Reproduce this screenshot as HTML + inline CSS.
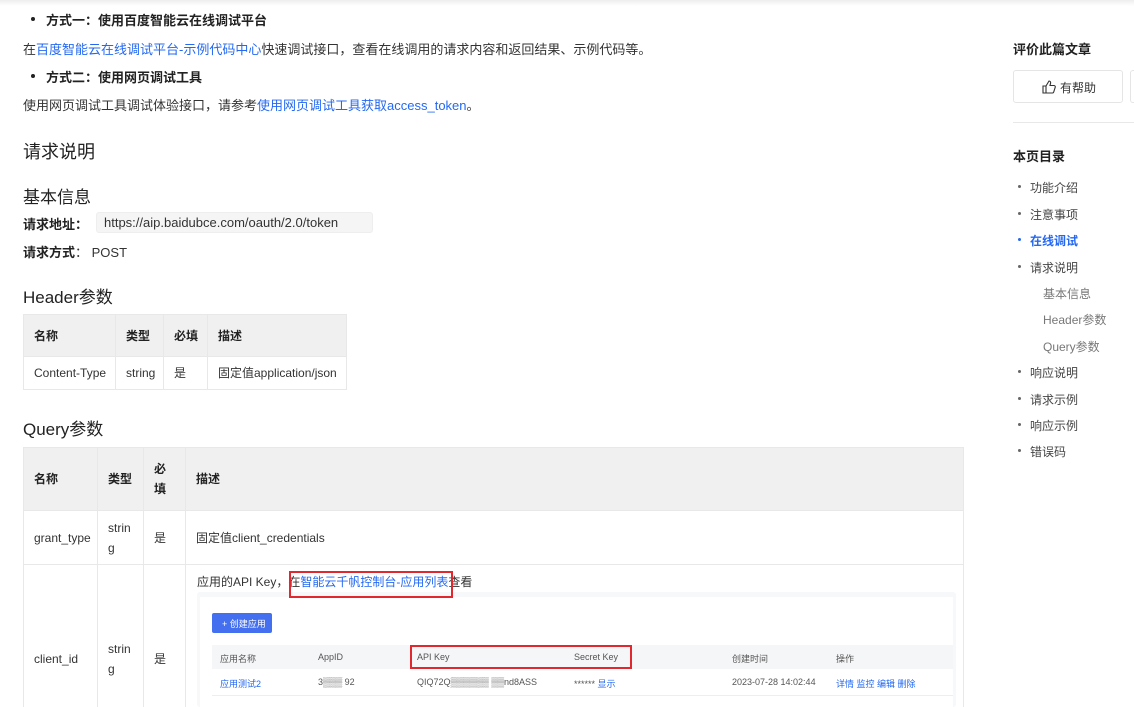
<!DOCTYPE html>
<html style="width:1134px;height:707px;overflow:hidden"><head><meta charset="utf-8"><style>
*{margin:0;padding:0;box-sizing:border-box}
body{width:1134px;height:707px;overflow:hidden;background:#fff;font-family:"Liberation Sans","Noto Sans CJK SC",sans-serif;color:#333;font-size:13px;position:relative}
.a{position:absolute;white-space:nowrap}
.b{font-weight:bold;color:#222}
.l{color:#2468f2}
table{position:absolute;border-collapse:collapse;font-size:12px;color:#333;table-layout:fixed}
td,th{border:1px solid #e8e8e8;padding:0 10px;text-align:left;vertical-align:middle;white-space:nowrap;line-height:20px}
th{background:#f0f0f0;font-weight:bold;color:#222}
.dot{position:absolute;width:4px;height:4px;border-radius:2px;background:#666}
.toc{position:absolute;left:1030px;font-size:12px;color:#444;white-space:nowrap}
.s{font-size:9px;color:#555;position:absolute;white-space:nowrap}
</style></head><body>
<div class="a" style="left:0;top:0;width:1134px;height:6px;background:linear-gradient(#eee,#fff)"></div>
<div class="dot" style="left:31px;top:17px;background:#222"></div>
<div class="a b" style="left:46px;top:10px">方式一：使用百度智能云在线调试平台</div>
<div class="a" style="left:23px;top:39px">在<span class="l">百度智能云在线调试平台-示例代码中心</span>快速调试接口，查看在线调用的请求内容和返回结果、示例代码等。</div>
<div class="dot" style="left:31px;top:74px;background:#222"></div>
<div class="a b" style="left:46px;top:67px">方式二：使用网页调试工具</div>
<div class="a" style="left:23px;top:95px">使用网页调试工具调试体验接口，请参考<span class="l">使用网页调试工具获取access_token</span>。</div>
<div class="a" style="left:23px;top:138px;font-size:18px;color:#222">请求说明</div>
<div class="a" style="left:23px;top:183px;font-size:17px;color:#222">基本信息</div>
<div class="a b" style="left:23px;top:214px">请求地址：</div>
<div class="a" style="left:96px;top:212px;width:277px;height:21px;background:#f5f5f5;border:1px solid #eee;border-radius:3px;padding:2px 7px;color:#333">https://aip.baidubce.com/oauth/2.0/token</div>
<div class="a" style="left:23px;top:242px"><b style="color:#222">请求方式</b>： POST</div>
<div class="a" style="left:23px;top:283px;font-size:17px;color:#222">Header参数</div>
<table style="left:23px;top:314px;width:323px">
<colgroup><col style="width:92px"><col style="width:48px"><col style="width:44px"><col style="width:139px"></colgroup>
<tr style="height:42px"><th>名称</th><th>类型</th><th>必填</th><th>描述</th></tr>
<tr style="height:33px"><td>Content-Type</td><td>string</td><td>是</td><td>固定值application/json</td></tr></table>
<div class="a" style="left:23px;top:415px;font-size:17px;color:#222">Query参数</div>
<table style="left:23px;top:447px;width:941px">
<colgroup><col style="width:74px"><col style="width:46px"><col style="width:42px"><col></colgroup>
<tr style="height:63px"><th>名称</th><th>类型</th><th>必<br>填</th><th>描述</th></tr>
<tr style="height:54px"><td>grant_type</td><td>strin<br>g</td><td>是</td><td>固定值client_credentials</td></tr>
<tr style="height:143px"><td style="padding-top:46px">client_id</td><td style="padding-top:46px">strin<br>g</td><td style="padding-top:46px">是</td><td></td></tr></table>
<div class="a" style="left:197px;top:573px;font-size:12px">应用的API Key，在<span class="l">智能云千帆控制台-应用列表</span>查看</div>
<div class="a" style="left:197px;top:592px;width:759px;height:115px;background:#f7f8fa;border-radius:3px"></div>
<div class="a" style="left:200px;top:597px;width:753px;height:110px;background:#fff"></div>
<div class="a" style="left:212px;top:613px;width:60px;height:20px;background:#4470f0;border-radius:2px;color:#fff;font-size:9px;padding:4px 0 0 10px">+ 创建应用</div>
<div class="a" style="left:212px;top:645px;width:741px;height:24px;background:#f5f6f8"></div>
<div class="s" style="left:220px;top:652px">应用名称</div><div class="s" style="left:318px;top:652px">AppID</div><div class="s" style="left:417px;top:652px">API Key</div><div class="s" style="left:574px;top:652px">Secret Key</div><div class="s" style="left:732px;top:652px">创建时间</div><div class="s" style="left:836px;top:652px">操作</div>
<div class="s l" style="left:220px;top:677px;color:#2468f2">应用测试2</div><div class="s" style="left:318px;top:677px">3▒▒▒ 92</div><div class="s" style="left:417px;top:677px">QIQ72Q▒▒▒▒▒▒ ▒▒nd8ASS</div><div class="s" style="left:574px;top:677px">****** <span style="color:#2468f2">显示</span></div><div class="s" style="left:732px;top:677px">2023-07-28 14:02:44</div><div class="s" style="left:836px;top:677px;color:#2468f2">详情 监控 编辑 删除</div>
<div class="a" style="left:212px;top:695px;width:741px;height:1px;background:#eee"></div>
<div class="a" style="left:289px;top:571px;width:164px;height:27px;border:2px solid #e0282e"></div>
<div class="a" style="left:410px;top:645px;width:222px;height:24px;border:2px solid #e0282e"></div>
<div class="a b" style="left:1013px;top:39px;font-size:13px">评价此篇文章</div>
<div class="a" style="left:1013px;top:70px;width:110px;height:33px;border:1px solid #e5e5e5;border-radius:3px;font-size:12px;padding:8px 0 0 28px;color:#333"><svg width="14" height="14" viewBox="0 0 14 14" style="vertical-align:-2px;margin-right:4px"><path d="M1 6h3v7H1zM4 6l3-5c1 0 2 1 1.5 2.5L8 5.5h4c1 0 1.5 1 1.2 1.8l-1.5 4.8c-.2.6-.7.9-1.3.9H4" fill="none" stroke="#333" stroke-width="1.1"/></svg>有帮助</div>
<div class="a" style="left:1130px;top:70px;width:4px;height:33px;border:1px solid #e5e5e5;border-right:none;border-radius:3px 0 0 3px"></div>
<div class="a" style="left:1013px;top:122px;width:121px;height:1px;background:#e8e8e8"></div>
<div class="a b" style="left:1013px;top:146px;font-size:13px">本页目录</div>
<div class="dot" style="left:1018px;top:185px;width:3px;height:3px"></div><div class="toc" style="top:179px">功能介绍</div>
<div class="dot" style="left:1018px;top:212px;width:3px;height:3px"></div><div class="toc" style="top:206px">注意事项</div>
<div class="dot" style="left:1018px;top:238px;width:3px;height:3px;background:#2468f2"></div><div class="toc" style="top:232px;color:#2468f2;font-weight:bold">在线调试</div>
<div class="dot" style="left:1018px;top:265px;width:3px;height:3px"></div><div class="toc" style="top:259px">请求说明</div>
<div class="toc" style="left:1043px;top:285px;color:#777">基本信息</div>
<div class="toc" style="left:1043px;top:311px;color:#777">Header参数</div>
<div class="toc" style="left:1043px;top:338px;color:#777">Query参数</div>
<div class="dot" style="left:1018px;top:370px;width:3px;height:3px"></div><div class="toc" style="top:364px">响应说明</div>
<div class="dot" style="left:1018px;top:397px;width:3px;height:3px"></div><div class="toc" style="top:391px">请求示例</div>
<div class="dot" style="left:1018px;top:423px;width:3px;height:3px"></div><div class="toc" style="top:417px">响应示例</div>
<div class="dot" style="left:1018px;top:449px;width:3px;height:3px"></div><div class="toc" style="top:443px">错误码</div>
</body></html>
